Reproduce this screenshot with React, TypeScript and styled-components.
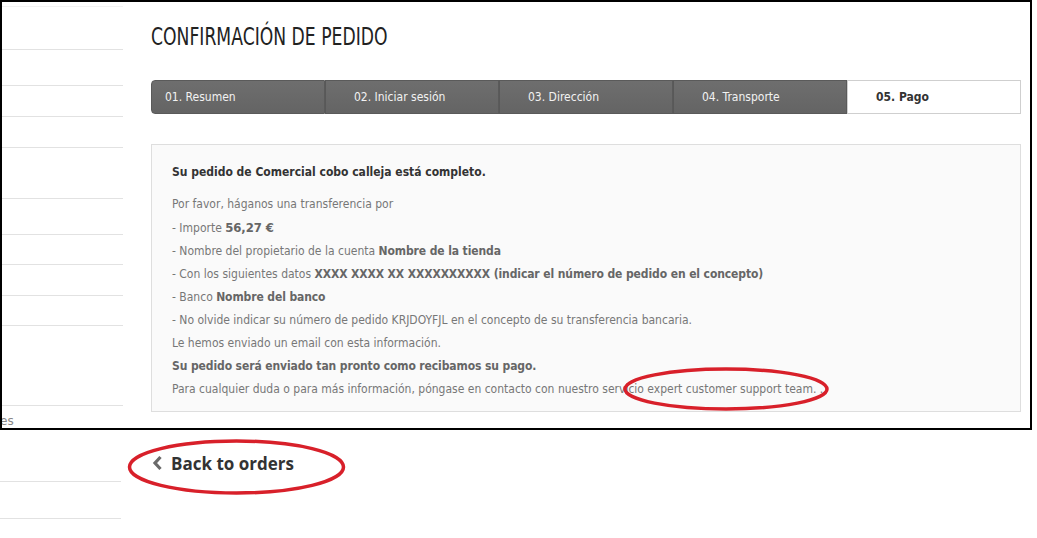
import React from 'react';
import styled, { createGlobalStyle } from 'styled-components';

const GlobalStyle = createGlobalStyle`
  html, body {
    margin: 0;
    padding: 0;
    background: #fff;
  }
  body {
    font-family: "DejaVu Sans Condensed", "DejaVu Sans", sans-serif;
    width: 1037px;
    height: 538px;
    overflow: hidden;
  }
`;

const Page = styled.div`
  position: relative;
  width: 1037px;
  height: 538px;
`;

const Frame = styled.div`
  width: 1028px;
  height: 426px;
  border: 2px solid #000;
  display: flex;
  overflow: hidden;
  background: #fff;
`;

const Sidebar = styled.div`
  width: 121px;
  flex-shrink: 0;
  display: flex;
  flex-direction: column;
`;

const SideItem = styled.div<{ $h: number; $faint?: boolean }>`
  height: ${(p) => p.$h}px;
  box-sizing: border-box;
  border-bottom: 1px solid ${(p) => (p.$faint ? '#f2f2f2' : '#e2e2e2')};
`;

const SideText = styled.div`
  font-family: "DejaVu Sans", sans-serif;
  font-size: 12px;
  color: #888;
  line-height: 14px;
  margin-top: 8px;
  margin-left: -2px;
`;

const Main = styled.div`
  margin-left: 28px;
  width: 870px;
  display: flex;
  flex-direction: column;
`;

const Title = styled.h1`
  margin: 21px 0 0 0;
  font-family: "DejaVu Sans Condensed", sans-serif;
  font-weight: normal;
  font-size: 25px;
  line-height: 28px;
  color: #222;
  white-space: nowrap;
  transform: scaleX(0.765);
  transform-origin: left center;
`;

const Steps = styled.div`
  margin-top: 29px;
  display: grid;
  grid-template-columns: repeat(5, 174px);
  height: 34px;
`;

const Step = styled.div<{ $active?: boolean; $first?: boolean }>`
  box-sizing: border-box;
  display: flex;
  align-items: center;
  padding-left: ${(p) => (p.$first ? 13 : 28)}px;
  font-size: 12px;
  color: ${(p) => (p.$active ? '#333' : '#f2f2f2')};
  font-weight: ${(p) => (p.$active ? 'bold' : 'normal')};
  background: ${(p) => (p.$active ? '#fff' : 'linear-gradient(#6e6e6e, #646464)')};
  border: 1px solid ${(p) => (p.$active ? '#cfcfcf' : '#5a5a5a')};
  border-radius: ${(p) => (p.$first ? '4px 0 0 4px' : '0')};
  ${(p) => (!p.$first && !p.$active ? 'border-left: 1px solid #585858;' : '')}
`;

const Box = styled.div`
  margin-top: 30px;
  box-sizing: border-box;
  width: 870px;
  height: 268px;
  background: #fafafa;
  border: 1px solid #dedede;
  padding: 18px 20px 0 20px;
  font-size: 12px;
  color: #777;
`;

const Heading = styled.p`
  margin: 0 0 12px 0;
  font-weight: bold;
  color: #333;
  line-height: 18px;
`;

const Line = styled.p`
  margin: 0;
  line-height: 23px;
  white-space: nowrap;
`;

const Strong = styled.b<{ $big?: boolean }>`
  color: #666;
  font-size: ${(p) => (p.$big ? '13px' : '12px')};
  letter-spacing: -0.1px;
`;

const Below = styled.div`
  display: flex;
`;

const BackLink = styled.a`
  margin: 22px 0 0 31px;
  display: flex;
  align-items: center;
  gap: 8px;
  height: 22px;
  font-family: "Open Sans", sans-serif;
  font-weight: bold;
  font-size: 17px;
  color: #333;
  text-decoration: none;
`;

const Ring = styled.svg`
  position: absolute;
  pointer-events: none;
  overflow: visible;
`;

const sideTop = [5, 43, 37, 31, 31, 51, 37, 30, 31, 30, 81];

const App = () => {
  return (
    <Page>
      <GlobalStyle />
      <Frame>
        <Sidebar>
          {sideTop.map((h, i) => (
            <SideItem key={i} $h={h} $faint={i === 0} />
          ))}
          <SideText>es</SideText>
        </Sidebar>
        <Main>
          <Title>CONFIRMACIÓN DE PEDIDO</Title>
          <Steps>
            <Step $first>01. Resumen</Step>
            <Step>02. Iniciar sesión</Step>
            <Step>03. Dirección</Step>
            <Step>04. Transporte</Step>
            <Step $active>05. Pago</Step>
          </Steps>
          <Box>
            <Heading>Su pedido de Comercial cobo calleja está completo.</Heading>
            <Line>Por favor, háganos una transferencia por</Line>
            <Line>
              - Importe <Strong $big>56,27 €</Strong>
            </Line>
            <Line>
              - Nombre del propietario de la cuenta <Strong>Nombre de la tienda</Strong>
            </Line>
            <Line>
              - Con los siguientes datos <Strong>XXXX XXXX XX XXXXXXXXXX (indicar el número de pedido en el concepto)</Strong>
            </Line>
            <Line>
              - Banco <Strong>Nombre del banco</Strong>
            </Line>
            <Line>- No olvide indicar su número de pedido KRJDOYFJL en el concepto de su transferencia bancaria.</Line>
            <Line>Le hemos enviado un email con esta información.</Line>
            <Line>
              <Strong>Su pedido será enviado tan pronto como recibamos su pago.</Strong>
            </Line>
            <Line>Para cualquier duda o para más información, póngase en contacto con nuestro servicio expert customer support team. .</Line>
          </Box>
        </Main>
      </Frame>
      <Below>
        <Sidebar>
          <SideItem $h={52} />
          <SideItem $h={37} />
        </Sidebar>
        <BackLink href="#">
          <svg width="11" height="16" viewBox="0 0 11 16">
            <path d="M8.5 2 L3 8 L8.5 14" fill="none" stroke="#6a6a6a" strokeWidth="3.2" />
          </svg>
          Back to orders
        </BackLink>
      </Below>
      <Ring style={{ left: 623, top: 366 }} width="206" height="46" viewBox="0 0 206 46">
        <ellipse cx="103" cy="23" rx="101" ry="20" fill="none" stroke="#d8202a" strokeWidth="3.5" />
      </Ring>
      <Ring style={{ left: 127, top: 439 }} width="219" height="56" viewBox="0 0 219 56">
        <ellipse cx="109.5" cy="28" rx="107" ry="26" fill="none" stroke="#d8202a" strokeWidth="3.5" />
      </Ring>
    </Page>
  );
};

export default App;
